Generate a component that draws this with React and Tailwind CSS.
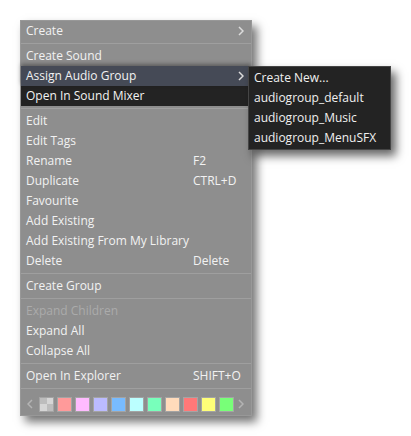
import { Fragment } from "react";

const GROUPS = [
  [{ label: "Create", sub: true }],
  [
    { label: "Create Sound" },
    { label: "Assign Audio Group", sub: true, tone: "hover" },
    { label: "Open In Sound Mixer", tone: "dark" },
  ],
  [
    { label: "Edit" },
    { label: "Edit Tags" },
    { label: "Rename", key: "F2" },
    { label: "Duplicate", key: "CTRL+D" },
    { label: "Favourite" },
    { label: "Add Existing" },
    { label: "Add Existing From My Library" },
    { label: "Delete", key: "Delete" },
  ],
  [{ label: "Create Group" }],
  [
    { label: "Expand Children", disabled: true },
    { label: "Expand All" },
    { label: "Collapse All" },
  ],
  [{ label: "Open In Explorer", key: "SHIFT+O" }],
];

const SWATCHES = [
  "#ff9a9a",
  "#ffbbff",
  "#bbbbff",
  "#78bbff",
  "#bbffff",
  "#78ffbb",
  "#ffdbbb",
  "#ff7878",
  "#ffff78",
  "#78ff78",
];

const AUDIO_GROUPS = [
  "Create New...",
  "audiogroup_default",
  "audiogroup_Music",
  "audiogroup_MenuSFX",
];

function Chevron({ className }) {
  return (
    <svg width="6" height="10" viewBox="0 0 6 10" className={className}>
      <path
        d="M1 1 L5 5 L1 9"
        fill="none"
        stroke="currentColor"
        strokeWidth="1.5"
      />
    </svg>
  );
}

function Row({ item }) {
  const bg =
    item.tone === "hover"
      ? "bg-[#454a56] relative shadow-[0_-2px_4px_rgba(0,0,0,0.35)]"
      : item.tone === "dark"
        ? "bg-[#232323]"
        : "";
  return (
    <div
      className={`flex items-center h-5 pl-[5px] ${bg} ${
        item.disabled ? "text-[#ababab]" : "text-[#f2f2f2]"
      }`}
    >
      <span className="w-[167px] shrink-0 whitespace-nowrap">{item.label}</span>
      {item.key && <span className="whitespace-nowrap">{item.key}</span>}
      {item.sub && <Chevron className="ml-auto mr-[7px] text-[#dcdcdc]" />}
    </div>
  );
}

function Separator() {
  return (
    <div className="py-[2px]">
      <div className="h-px bg-[#9f9f9f]" />
    </div>
  );
}

function ColorRow() {
  return (
    <div className="flex items-center h-6 pl-[6px] pr-[5px] pt-[2px]">
      <Chevron className="rotate-180 text-[#b4b4b4] mr-[6px]" />
      <div className="flex gap-[3px]">
        <div className="grid grid-cols-2 w-[15px] h-[15px] border border-[#a4a4a4]">
          <div className="bg-[#bdbdbd]" />
          <div className="bg-[#d6d6d6]" />
          <div className="bg-[#d6d6d6]" />
          <div className="bg-[#bdbdbd]" />
        </div>
        {SWATCHES.map((c) => (
          <div
            key={c}
            className="w-[15px] h-[15px] border border-[#a4a4a4]"
            style={{ backgroundColor: c }}
          />
        ))}
      </div>
      <Chevron className="ml-auto mr-[2px] text-[#b4b4b4]" />
    </div>
  );
}

export default function App() {
  return (
    <div
      className="relative bg-white w-[411px] h-[436px] pl-5 pt-5 text-[12px] leading-5"
      style={{ fontFamily: '"Open Sans", "Noto Sans", sans-serif' }}
    >
      <div className="w-[232px] bg-[#8e8e8e] border border-[#989898] shadow-[5px_6px_9px_rgba(0,0,0,0.55)]">
        {GROUPS.map((group, gi) => (
          <Fragment key={gi}>
            {gi > 0 && <Separator />}
            {group.map((item) => (
              <Row key={item.label} item={item} />
            ))}
          </Fragment>
        ))}
        <Separator />
        <ColorRow />
      </div>
      <div className="absolute left-[248px] top-[66px] w-[143px] bg-[#232323] border border-[#454545] py-px shadow-[5px_6px_9px_rgba(0,0,0,0.6)]">
        {AUDIO_GROUPS.map((g) => (
          <div key={g} className="h-5 pl-[5px] text-[#f0f0f0] whitespace-nowrap">
            {g}
          </div>
        ))}
      </div>
    </div>
  );
}
